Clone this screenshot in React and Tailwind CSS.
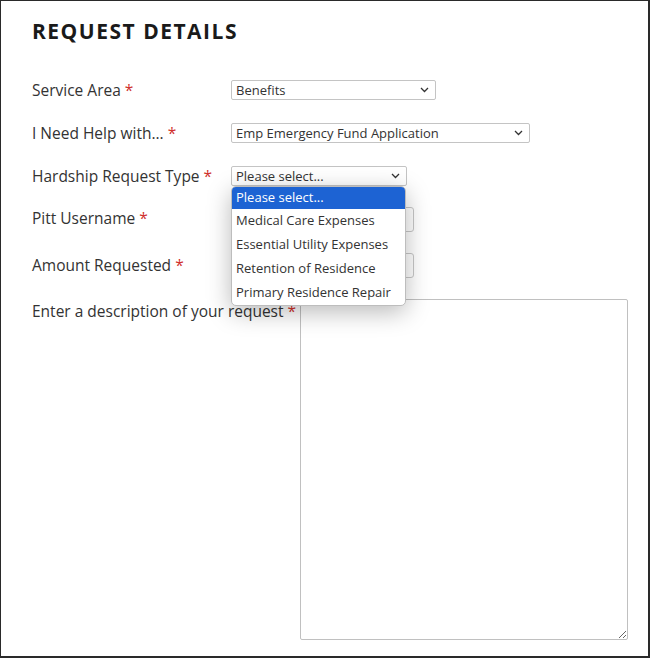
import React from 'react';

const font = { fontFamily: '"Open Sans", "Liberation Sans", sans-serif' };

const Chevron = () => (
  <svg width="9" height="6" viewBox="0 0 9 6" className="shrink-0">
    <polyline points="1,1 4.5,4.5 8,1" fill="none" stroke="#333" strokeWidth="1.3" />
  </svg>
);

const Required = () => <span className="text-[#d0312d]"> *</span>;

const FakeSelect = ({value, width}) => (
  <div className={`flex h-[20px] items-center justify-between rounded-[2px] border border-[#c4c4c4] bg-white pl-[4px] pr-[6px] text-[13px] leading-[18px] text-[#333] ${width}`}>
    <span className="whitespace-nowrap">{value}</span>
    <Chevron />
  </div>
);

const Label = ({children, wide, extra = ''}) => (
  <label className={`text-[15.5px] leading-[20px] text-[#333] ${wide ? 'whitespace-nowrap pt-[2px]' : 'w-[199px] shrink-0'} ${extra}`}>
    {children}<Required />
  </label>
);

const options = [
  'Medical Care Expenses',
  'Essential Utility Expenses',
  'Retention of Residence',
  'Primary Residence Repair'
];

// open list of the hardship select, drawn over the rows below it
const Dropdown = () => (
  <div className="absolute left-0 top-[20px] z-10 w-[175px] overflow-hidden rounded-[5px] border border-[#bdbdbd] bg-white text-[13px] text-[#333] shadow-[0_6px_24px_rgba(0,0,0,0.28)]">
    <div className="flex h-[22px] items-center bg-[#1d63d3] pl-[4px] text-white">Please select...</div>
    {options.map(o => (
      <div key={o} className="flex h-[24px] items-center pl-[4px]">{o}</div>
    ))}
  </div>
);

export default function App() {
  return (
    <div style={font} className="h-[658px] w-[650px] border-b-2 border-l border-r-2 border-t border-[#2a2a2a] bg-white pl-[31px]">
      <h1 className="mt-[16px] text-[21px] font-bold leading-[28px] tracking-[1.5px] text-[#1a1a1a]">REQUEST DETAILS</h1>

      <div className="mt-[35px] flex items-center">
        <Label>Service Area</Label>
        <FakeSelect value="Benefits" width="w-[205px]" />
      </div>

      <div className="mt-[23px] flex items-center">
        <Label>I Need Help with...</Label>
        <FakeSelect value="Emp Emergency Fund Application" width="w-[299px]" />
      </div>

      <div className="mt-[23px] flex items-center">
        <Label>Hardship Request Type</Label>
        <div className="relative">
          <FakeSelect value="Please select..." width="w-[176px]" />
          <Dropdown />
        </div>
      </div>

      <div className="mt-[21px] flex items-center">
        <Label extra="mb-[3px]">Pitt Username</Label>
        <input className="h-[25px] w-[183px] rounded-[3px] border border-[#c8c8c8] bg-white" />
      </div>

      <div className="mt-[21px] flex items-center">
        <Label extra="mb-[2px]">Amount Requested</Label>
        <input className="h-[25px] w-[183px] rounded-[3px] border border-[#c8c8c8] bg-white" />
      </div>

      <div className="mt-[21px] flex items-start gap-[4px]">
        <Label wide>Enter a description of your request</Label>
        <textarea className="h-[341px] w-[328px] rounded-[2px] border border-[#c0c0c0] bg-white" />
      </div>
    </div>
  );
}
